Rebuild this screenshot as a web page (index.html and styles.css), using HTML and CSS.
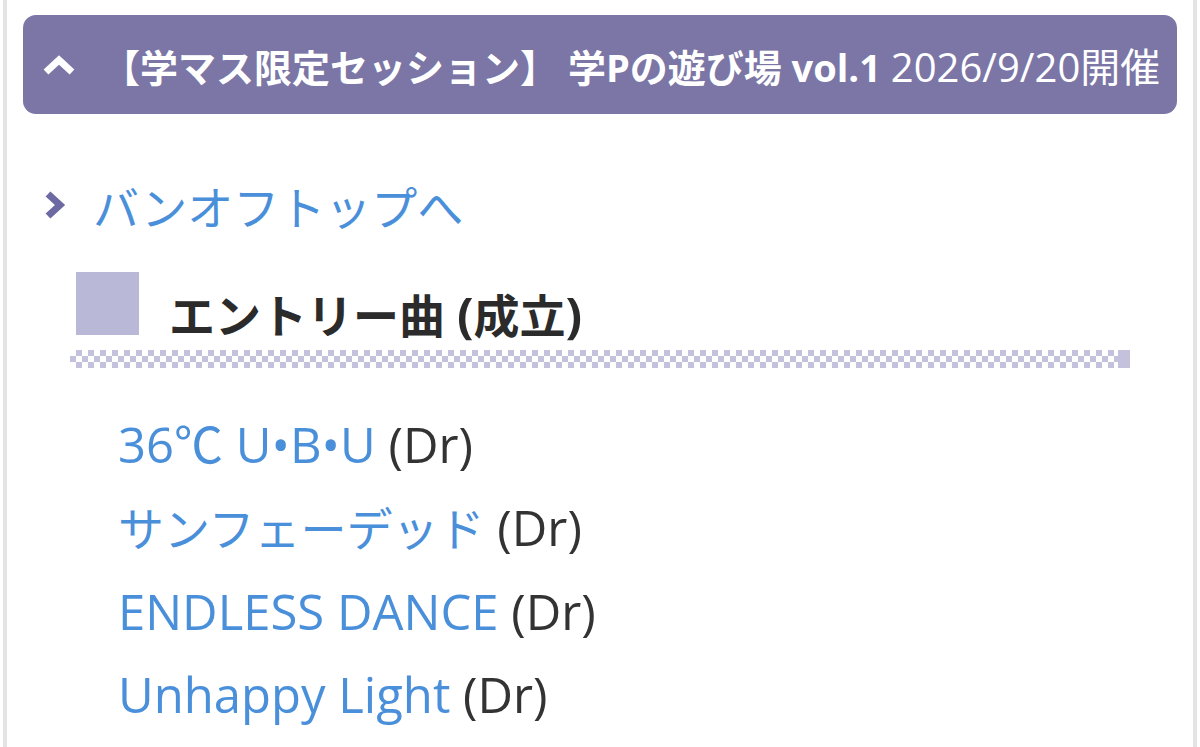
FILE: index.html
```html
<!DOCTYPE html>
<html lang="ja">
<head>
	<meta charset="UTF-8">
	<title>学Pの遊び場 vol.1</title>
	<link rel="stylesheet" href="styles.css">
</head>
<body>
	<main class="panel">
		<h2 class="session">
			<i class="fold">
				<svg viewBox="0 0 34 22" width="34" height="22"><polyline points="4,18 17,6 30,18" fill="none" stroke="#fff" stroke-width="7"/></svg>
			</i>
			<span class="session-name"><b><span class="open-bracket">【</span>学マス限定セッション】 学Pの遊び場 vol.1</b> <span class="date">2026/9/20開催</span></span>
		</h2>

		<p class="back">
			<i class="arrow">
				<svg viewBox="0 0 24 30" width="24" height="30"><polyline points="5,4 17,15 5,26" fill="none" stroke="#6d69a2" stroke-width="7"/></svg>
			</i>
			<a href="#">バンオフトップへ</a>
		</p>

		<h3 class="entry-title">
			<i class="mark"></i>
			<span>エントリー曲 <span class="en">(</span>成立<span class="en">)</span></span>
		</h3>
		<div class="checker"></div>

		<ul class="songs">
			<li><a href="#">36℃ U•B•U</a> (Dr)</li>
			<li><a href="#" class="ja">サンフェーデッド</a> (Dr)</li>
			<li><a href="#">ENDLESS DANCE</a> (Dr)</li>
			<li><a href="#">Unhappy Light</a> (Dr)</li>
		</ul>
	</main>
</body>
</html>
```

FILE: styles.css
```css
html,body{
	margin: 0;
	height: 100%;
	background-color: #fff;
	font-family: "Open Sans", "Noto Sans CJK JP", sans-serif;
	color: #333;
}
a{
	color: #4a8fda;
	text-decoration: none;
}
i{
	display: block;
	flex: none;
}
.panel{
	min-height: 100%;
	box-sizing: border-box;
	margin: 0 3px;
	padding: 15px 16px 0;
	border-left: 4px solid #e4e4e4;
	border-right: 4px solid #e4e4e4;
}
/* 見出しバー */
.session{
	display: flex;
	align-items: center;
	height: 99px;
	margin: 0;
	padding-left: 19px;
	color: #fff;
	background-color: #7b76a6;
	border-radius: 13px;
	font-size: 38px;
	font-weight: normal;
	white-space: nowrap;
}
.fold{
	width: 34px;
	height: 22px;
	margin-right: 45px;
}
.fold svg,.arrow svg{
	display: block;
}
.session b{
	font-weight: bold;
}
.session .date{
	font-size: 40px;
}
/* 行頭の括弧は半角幅 */
.open-bracket{
	font-feature-settings: "halt";
}
/* トップへ */
.back{
	display: flex;
	align-items: center;
	height: 60px;
	margin: 61px 0 0;
	padding-left: 20px;
	font-size: 46px;
}
.arrow{
	width: 24px;
	height: 30px;
	margin-right: 26px;
}
/* エントリー曲 */
.entry-title{
	display: flex;
	align-items: flex-end;
	height: 63px;
	margin: 37px 0 0 53px;
	font-size: 46px;
	line-height: 50px;
	color: #2b2b2b;
}
.entry-title > span{
	position: relative;
	top: 5px;
}
.entry-title .en{
	font-size: 49px;
}
.mark{
	width: 63px;
	height: 63px;
	margin-right: 30px;
	background-color: #bab8d7;
}
.checker{
	height: 18px;
	margin: 15px 47px 0;
	background:
		linear-gradient(#c3c1dc, #c3c1dc) right 0 top 0/12px 100% no-repeat,
		repeating-conic-gradient(#c3c1dc 0 25%, #fff 0 50%) 0 0/12px 12px;
}
/* 曲リスト */
.songs{
	margin: 35px 0 0;
	padding-left: 95px;
	list-style: none;
	font-size: 49px;
	line-height: 83px;
}
.songs .ja{
	font-size: 46px;
}
```
